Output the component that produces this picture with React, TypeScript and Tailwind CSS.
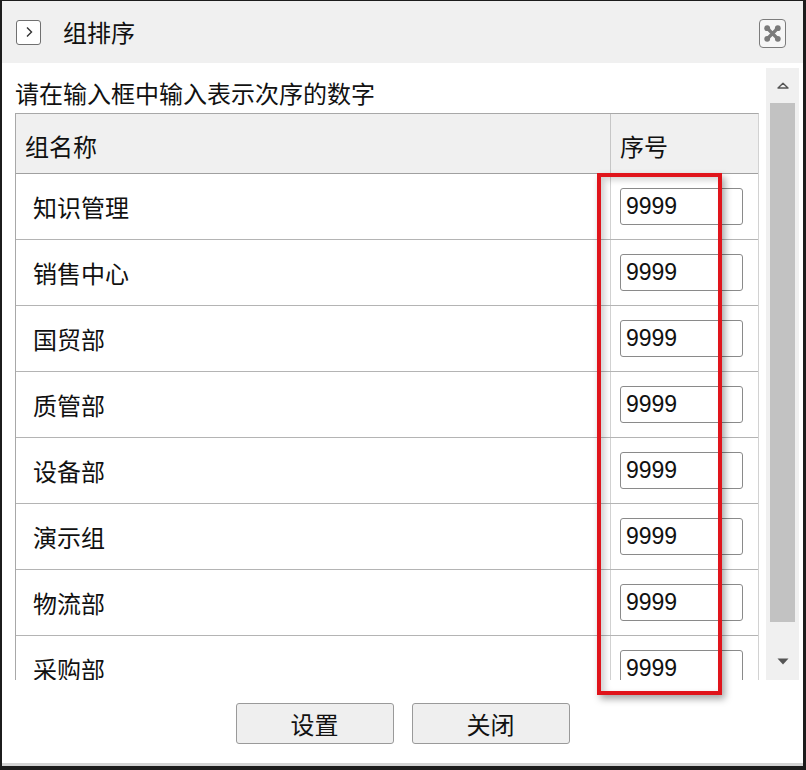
import React from "react";

const GROUPS = ["知识管理", "销售中心", "国贸部", "质管部", "设备部", "演示组", "物流部", "采购部"];

const CJK = "font-['Noto_Sans_CJK_SC','Noto_Sans',sans-serif]";

function CloseIcon() {
  return (
    <svg width="19" height="19" viewBox="0 0 19 19">
      <path d="M4.5 4.5 L14.5 14.5 M14.5 4.5 L4.5 14.5" stroke="#7a7a7a" strokeWidth="3.2" strokeLinecap="round" />
      <circle cx="4.2" cy="4.2" r="2.9" fill="#7a7a7a" />
      <circle cx="14.8" cy="4.2" r="2.9" fill="#7a7a7a" />
      <circle cx="4.2" cy="14.8" r="2.9" fill="#7a7a7a" />
      <circle cx="14.8" cy="14.8" r="2.9" fill="#7a7a7a" />
    </svg>
  );
}

function Scrollbar() {
  return (
    <div className="flex h-full w-[33px] flex-col bg-[#f0f0f0]">
      <div className="flex h-[35px] items-center justify-center">
        <svg width="12" height="7" viewBox="0 0 12 7">
          <path d="M1 6 L6 1.2 L11 6 Z" fill="none" stroke="#555" strokeWidth="1.4" strokeLinejoin="round" />
        </svg>
      </div>
      <div className="flex-1 px-[4px]">
        <div className="h-[519px] bg-[#c2c2c2]" />
      </div>
      <div className="flex h-[37px] items-start justify-center pt-[15px]">
        <svg width="12" height="7" viewBox="0 0 12 7">
          <path d="M0.5 0.5 L11.5 0.5 L6 6.5 Z" fill="#555" />
        </svg>
      </div>
    </div>
  );
}

function Row({ name }: { name: string }) {
  return (
    <div className="flex h-[66px] border-b border-[#b4b4b4]">
      <div className="flex w-[595px] items-center border-r border-[#d2d2d2] pl-[17px] text-[24px] text-[#111]">
        {name}
      </div>
      <div className="flex flex-1 items-center pl-[9px]">
        <div className="flex h-[37px] w-[123px] items-center rounded-[3px] border border-[#8a8a8a] bg-white pl-[5px] font-['Liberation_Sans',Arial,sans-serif] text-[23px] text-[#111]">
          9999
        </div>
      </div>
    </div>
  );
}

export default function App() {
  return (
    <div className={`h-[770px] w-[806px] bg-[#1c1c1c] pt-[1px] pr-[3px] pb-[4px] pl-[2px] ${CJK}`}>
      <div className="relative flex h-full flex-col bg-white">
        {/* title bar */}
        <div className="flex h-[62px] items-center bg-[#f0f0f0] pl-[14px] pr-[17px]">
          <div className="flex h-[25px] w-[25px] items-center justify-center rounded-[3px] border border-[#707070] bg-white">
            <svg width="10" height="12" viewBox="0 0 10 12">
              <path d="M3 1.5 L7.5 6 L3 10.5" fill="none" stroke="#333" strokeWidth="1.4" />
            </svg>
          </div>
          <span className="ml-[22px] text-[24px] text-[#111]">组排序</span>
          <div className="ml-auto mt-[3px] flex h-[29px] w-[27px] items-center justify-center rounded-[4px] border border-[#7c7c7c] bg-[#f6f6f6]">
            <CloseIcon />
          </div>
        </div>

        {/* body */}
        <div className="flex h-[617px] pt-[5px] pr-[4px]">
          <div className="h-full flex-1 overflow-hidden pl-[13px] pt-[9px]">
            <p className="h-[32px] text-[24px] leading-[32px] text-[#111]">请在输入框中输入表示次序的数字</p>
            <div className="mt-[4px] w-[744px] border-x border-t border-[#a8a8a8] border-r-[#d2d2d2]">
              <div className="flex h-[60px] border-b border-[#a0a0a0] bg-[#f0f0f0] text-[24px] text-[#111]">
                <div className="flex w-[595px] items-center border-r border-[#c6c6c6] pl-[9px] pt-[4px]">组名称</div>
                <div className="flex flex-1 items-center pl-[9px] pt-[4px]">序号</div>
              </div>
              {GROUPS.map((g) => (
                <Row key={g} name={g} />
              ))}
            </div>
          </div>
          <Scrollbar />
        </div>

        {/* footer */}
        <div className="flex flex-1 justify-center gap-[18px] pt-[23px]">
          <button className="h-[41px] w-[158px] rounded-[3px] border border-[#9a9a9a] bg-[#efefef] text-[24px] text-[#111]">
            设置
          </button>
          <button className="h-[41px] w-[158px] rounded-[3px] border border-[#9a9a9a] bg-[#efefef] text-[24px] text-[#111]">
            关闭
          </button>
        </div>
        <div className="h-[3px] bg-[#d4d4d4]" />

        {/* highlight box */}
        <div className="absolute left-[595px] top-[172px] h-[522px] w-[125px] border-[4px] border-[#e0141b] shadow-[3px_4px_7px_rgba(0,0,0,0.35),inset_4px_3px_6px_rgba(0,0,0,0.18)]" />
      </div>
    </div>
  );
}
